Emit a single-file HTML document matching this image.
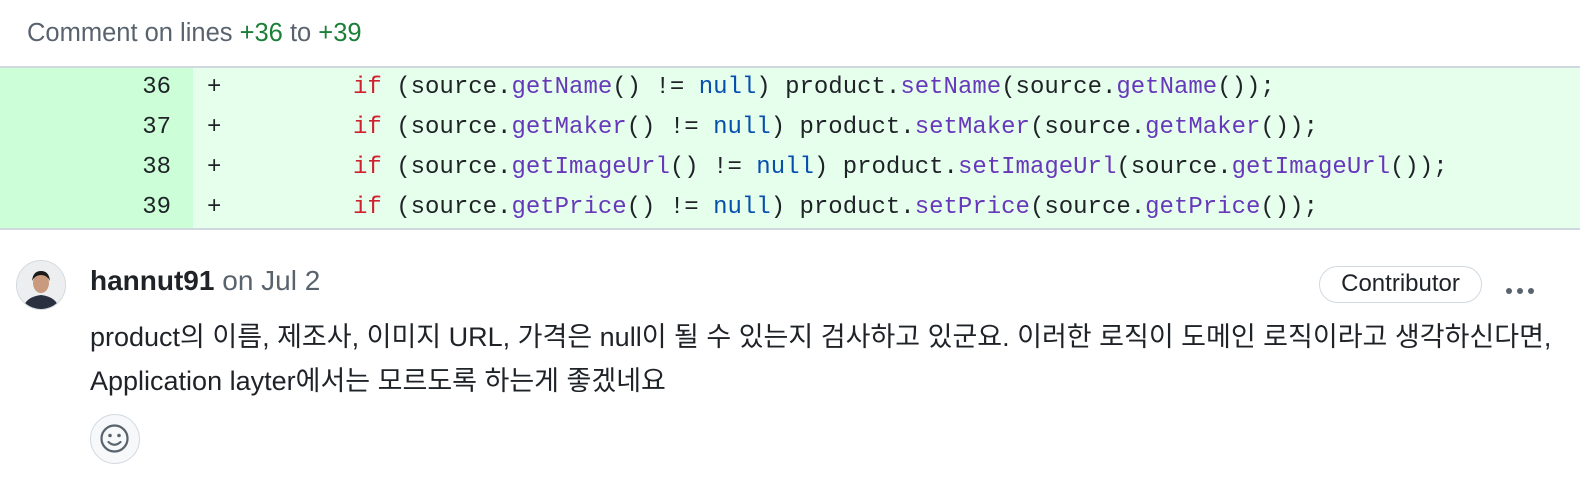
<!DOCTYPE html>
<html><head><meta charset="utf-8"><style>
body{margin:0;width:1580px;height:500px;background:#fff;font-family:"Liberation Sans","Noto Sans CJK KR",sans-serif;position:relative;overflow:hidden;color:#1f2328}
.hdr{position:absolute;left:27px;top:18px;font-size:25.5px;line-height:30px;color:#59636e}
.hdr b{font-weight:normal;color:#1a7f37}
.diff{position:absolute;left:0;top:66px;width:1580px;height:160px;border-top:2px solid #d1d9e0;border-bottom:2px solid #d1d9e0;background:#e6ffec}
.gut{position:absolute;left:0;top:0;width:193px;height:160px;background:#ccffd8}
.row{position:absolute;left:0;height:40px;line-height:40px;font-family:"Liberation Mono",monospace;font-size:24px;width:1580px}
.num{position:absolute;right:1409px;}
.plus{position:absolute;left:207px}
.code{position:absolute;left:353px;white-space:pre}
.k{color:#cf222e}.f{color:#6639ba}.n{color:#0550ae}
.av{position:absolute;left:16px;top:260px;width:48px;height:48px;border-radius:50%;border:1px solid #d1d9e0;background:#f0f0f0;overflow:hidden}
.name{position:absolute;left:90px;top:264px;font-size:28px;line-height:34px}
.name b{font-weight:bold}.name span{color:#59636e}
.badge{position:absolute;left:1319px;top:266px;width:163px;height:37px;border:1.5px solid #d1d9e0;border-radius:19px;box-sizing:border-box;font-size:24px;line-height:34px;text-align:center}
.dots{position:absolute;left:1506px;top:281px}
.dots i{display:inline-block;width:6px;height:6px;border-radius:50%;background:#59636e;margin-right:5px}
.body{position:absolute;left:90px;top:315px;font-size:27px;line-height:44px;white-space:nowrap}
.smile{position:absolute;left:90px;top:414px;width:50px;height:50px;border-radius:50%;border:1.5px solid #d1d9e0;background:#f6f8fa;box-sizing:border-box}
</style></head><body>
<div class="hdr">Comment on lines <b>+36</b> to <b>+39</b></div>
<div class="diff"><div class="gut"></div>
<div class="row" style="top:0"><span class="num">36</span><span class="plus">+</span><span class="code"><span class="k">if</span> (source.<span class="f">getName</span>() != <span class="n">null</span>) product.<span class="f">setName</span>(source.<span class="f">getName</span>());</span></div>
<div class="row" style="top:40px"><span class="num">37</span><span class="plus">+</span><span class="code"><span class="k">if</span> (source.<span class="f">getMaker</span>() != <span class="n">null</span>) product.<span class="f">setMaker</span>(source.<span class="f">getMaker</span>());</span></div>
<div class="row" style="top:80px"><span class="num">38</span><span class="plus">+</span><span class="code"><span class="k">if</span> (source.<span class="f">getImageUrl</span>() != <span class="n">null</span>) product.<span class="f">setImageUrl</span>(source.<span class="f">getImageUrl</span>());</span></div>
<div class="row" style="top:120px"><span class="num">39</span><span class="plus">+</span><span class="code"><span class="k">if</span> (source.<span class="f">getPrice</span>() != <span class="n">null</span>) product.<span class="f">setPrice</span>(source.<span class="f">getPrice</span>());</span></div>
</div>
<div class="av"><svg width="48" height="48" viewBox="0 0 48 48"><rect width="48" height="48" fill="#eceeef"/><path d="M6 48 Q8 36 24 34 Q40 36 42 48Z" fill="#2b3040"/><ellipse cx="24" cy="22" rx="8" ry="10" fill="#c99a7d"/><path d="M15 20 Q16 10 24 10 Q32 10 33 20 Q30 14 24 14 Q18 14 15 20Z" fill="#1a1a1a"/></svg></div>
<div class="name"><b>hannut91</b> <span>on Jul 2</span></div>
<div class="badge">Contributor</div>
<div class="dots"><i></i><i></i><i></i></div>
<div class="body">product의 이름, 제조사, 이미지 URL, 가격은 null이 될 수 있는지 검사하고 있군요. 이러한 로직이 도메인 로직이라고 생각하신다면,<br>Application layter에서는 모르도록 하는게 좋겠네요</div>
<div class="smile"><svg width="47" height="47" viewBox="0 0 47 47"><circle cx="23.5" cy="23.5" r="13" fill="none" stroke="#59636e" stroke-width="2.2"/><circle cx="19" cy="20.5" r="1.8" fill="#59636e"/><circle cx="28" cy="20.5" r="1.8" fill="#59636e"/><path d="M17.5 27 Q23.5 32.5 29.5 27" fill="none" stroke="#59636e" stroke-width="2.2" stroke-linecap="round"/></svg></div>
</body></html>
